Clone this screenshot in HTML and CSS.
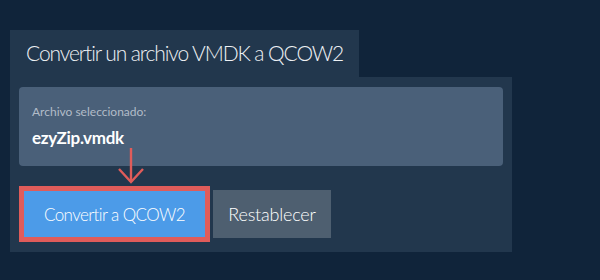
FILE: index.html
```html
<!DOCTYPE html>
<html lang="es">
  <head>
    <meta charset="UTF-8" />
    <meta name="viewport" content="width=device-width, initial-scale=1.0" />
    <title>Convertir VMDK a QCOW2</title>
    <link rel="stylesheet" href="styles.css">
  </head>
  <body>
    <div class="wrap">
      <div class="tab">Convertir un archivo VMDK a QCOW2</div>
      <div class="panel">
        <div class="file-box">
          <div class="file-label">Archivo seleccionado:</div>
          <div class="file-name">ezyZip.vmdk</div>
        </div>
        <div class="actions">
          <svg class="arrow" width="28" height="36" viewBox="0 0 28 36">
            <line x1="13" y1="0" x2="13" y2="34" />
            <polyline points="1,21 13,34 25,21" />
          </svg>
          <div class="highlight">
            <button class="btn btn-convert">Convertir a QCOW2</button>
          </div>
          <button class="btn btn-reset">Restablecer</button>
        </div>
      </div>
    </div>
  </body>
</html>
```

FILE: styles.css
```css
body {
  margin: 0;
  background-color: #10243a;
  font-family: Lato, "Open Sans", Arial, sans-serif;
  color: #fff;
}
.wrap {
  padding: 30px 0 0 10px;
}
.tab {
  display: inline-block;
  padding: 0 16px;
  height: 47px;
  line-height: 46px;
  font-size: 21px;
  font-weight: 300;
  letter-spacing: -1.1px;
  background-color: #22374d;
  color: #eef1f4;
}
.panel {
  width: 484px;
  padding: 10px 9px;
  background-color: #22374d;
}
.file-box {
  height: 79px;
  padding: 0 13px;
  box-sizing: border-box;
  background-color: #4a6079;
  border-radius: 4px;
  padding-top: 16px;
}
.file-label {
  font-size: 12px;
  color: #b2bcc8;
  line-height: 18px;
}
.file-name {
  margin-top: 7px;
  font-size: 17px;
  font-weight: bold;
  letter-spacing: -0.3px;
  color: #fff;
  line-height: 20px;
}
.actions {
  position: relative;
  display: flex;
  align-items: center;
  gap: 3px;
  margin-top: 20px;
}
.arrow {
  position: absolute;
  left: 99px;
  top: -38px;
  fill: none;
  stroke: #e05c5a;
  stroke-width: 2.4;
}
.highlight {
  border: 5px solid #e05c5a;
}
.btn {
  border: none;
  font-family: inherit;
  font-size: 18px;
  font-weight: 300;
  color: #fff;
  padding: 0;
  cursor: pointer;
}
.btn-convert {
  display: block;
  width: 181px;
  height: 46px;
  font-size: 17px;
  letter-spacing: -0.6px;
  background-color: #4c9be8;
}
.btn-reset {
  width: 118px;
  height: 48px;
  letter-spacing: -0.2px;
  background-color: #4e5f70;
}
```
